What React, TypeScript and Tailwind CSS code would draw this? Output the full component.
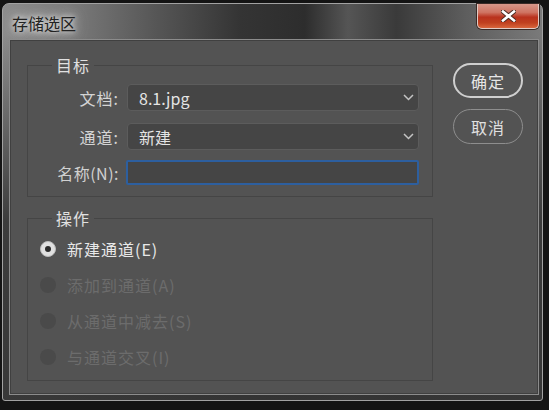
import React from 'react';

const Chevron = () => (
  <svg width="11" height="7" viewBox="0 0 11 7" className="shrink-0">
    <polyline points="1,1 5.5,5.5 10,1" fill="none" stroke="#c4c4c4" strokeWidth="1.5" />
  </svg>
);

function Select({ value }: { value: string }) {
  return (
    <div className="w-[292px] h-[27px] flex items-center justify-between pl-[11px] pr-[4px] bg-[#454545] border border-[#5c5c5c] rounded-[4px]">
      <span className="text-[16px] leading-[22px] text-[#e4e4e4]">{value}</span>
      <Chevron />
    </div>
  );
}

function Radio({ label, checked, disabled }: { label: string; checked?: boolean; disabled?: boolean }) {
  return (
    <div className="h-[36px] flex items-center gap-[11px]">
      {checked ? (
        <div className="w-[16px] h-[16px] rounded-full bg-[#e0e0e0] border border-[#bcbcbc] flex items-center justify-center">
          <div className="w-[6px] h-[6px] rounded-full bg-[#2a2a2a]" />
        </div>
      ) : (
        <div className="w-[16px] h-[16px] rounded-full bg-[#4a4a4a]" />
      )}
      <span className={disabled ? 'text-[16px] leading-[22px] text-[#6c6c6c] tracking-[1px]' : 'text-[16px] leading-[22px] text-[#e8e8e8] tracking-[1px]'}>
        {label}
      </span>
    </div>
  );
}

export default function App() {
  return (
    <div className="w-[549px] h-[410px] bg-[#141414] pl-[2px] pt-[3px] font-['Microsoft_YaHei','Noto_Sans_CJK_SC',sans-serif] overflow-hidden">
      {/* Window frame */}
      <div className="w-[541px] h-[398px] rounded-t-[7px] rounded-b-[3px] border border-[#a2a2a2] flex flex-col bg-[linear-gradient(to_bottom,transparent_0%,transparent_8%,rgba(52,52,52,0.9)_55%,rgba(52,52,52,0.95)_100%),linear-gradient(to_right,#8c8c8c_0%,#7c7c7c_12%,#575757_28%,#343434_44%,#2d2d2d_56%,#555555_64%,#3a3a3a_73%,#5e5e5e_86%,#7a7a7a_100%)]">
        {/* Title bar */}
        <div className="h-[35px] shrink-0 flex justify-between">
          <span className="ml-[9px] mt-[8px] text-[16px] leading-[22px] text-[#222] [text-shadow:0_0_5px_#e6e6e6,0_0_10px_#d6d6d6,0_0_16px_#bbb]">存储选区</span>
          <div className="mr-[3px] w-[62px] h-[25px] rounded-b-[5px] border border-t-0 border-[#e2cbc4] shadow-[0_0_0_1px_#3a2a26] flex items-center justify-center bg-[linear-gradient(to_bottom,#d8978a_0%,#cf7462_35%,#b9321d_55%,#c0401f_78%,#d8653c_100%)]">
            <svg width="15" height="12" viewBox="0 0 15 12">
              <path d="M2 1.5 L13 10.5 M13 1.5 L2 10.5" stroke="#4a2a22" strokeWidth="4.5" strokeLinecap="square" />
              <path d="M2 1.5 L13 10.5 M13 1.5 L2 10.5" stroke="#ffffff" strokeWidth="2.6" strokeLinecap="square" />
            </svg>
          </div>
        </div>

        {/* Client area */}
        <div className="ml-[6px] w-[530px] h-[356px] border border-[#8c8c8c] shadow-[inset_0_0_0_1px_#404040] bg-[#535353] flex">
          <div className="ml-[17px] flex flex-col">
            {/* 目标 */}
            <div className="relative mt-[25px] w-[406px] h-[132px] border border-[#454545] pt-[18px]">
              <span className="absolute left-[24px] top-[-12px] px-[4px] bg-[#535353] text-[16px] leading-[22px] text-[#e0e0e0] tracking-[1px]">目标</span>
              <div className="h-[27px] flex items-center gap-[8px]">
                <span className="w-[91px] text-right text-[16px] leading-[22px] text-[#d4d4d4] tracking-[1px]">文档:</span>
                <Select value="8.1.jpg" />
              </div>
              <div className="mt-[12px] h-[27px] flex items-center gap-[8px]">
                <span className="w-[91px] text-right text-[16px] leading-[22px] text-[#d4d4d4] tracking-[1px]">通道:</span>
                <Select value="新建" />
              </div>
              <div className="mt-[10px] h-[25px] flex items-center gap-[7px]">
                <span className="w-[91px] text-right text-[16px] leading-[22px] text-[#d0d0d0] tracking-[0.5px]">名称(N):</span>
                <div className="w-[293px] h-[25px] bg-[#454545] border-2 border-[#2d5f9f] rounded-[2px]" />
              </div>
            </div>

            {/* 操作 */}
            <div className="relative mt-[21px] w-[406px] h-[163px] border border-[#454545] pt-[12px] pl-[12px]">
              <span className="absolute left-[24px] top-[-12px] px-[4px] bg-[#535353] text-[16px] leading-[22px] text-[#e0e0e0] tracking-[1px]">操作</span>
              <Radio label="新建通道(E)" checked />
              <Radio label="添加到通道(A)" disabled />
              <Radio label="从通道中减去(S)" disabled />
              <Radio label="与通道交叉(I)" disabled />
            </div>
          </div>

          {/* Buttons */}
          <div className="ml-[20px] mt-[23px] flex flex-col gap-[11px]">
            <button className="w-[70px] h-[35px] rounded-full border-2 border-[#cfcfcf] text-[16px] leading-[22px] text-[#e6e6e6] bg-[#555555] tracking-[1px]">确定</button>
            <button className="w-[70px] h-[35px] rounded-full border border-[#8e8e8e] text-[16px] leading-[22px] text-[#e0e0e0] bg-[#535353] tracking-[1px]">取消</button>
          </div>
        </div>
      </div>
    </div>
  );
}
